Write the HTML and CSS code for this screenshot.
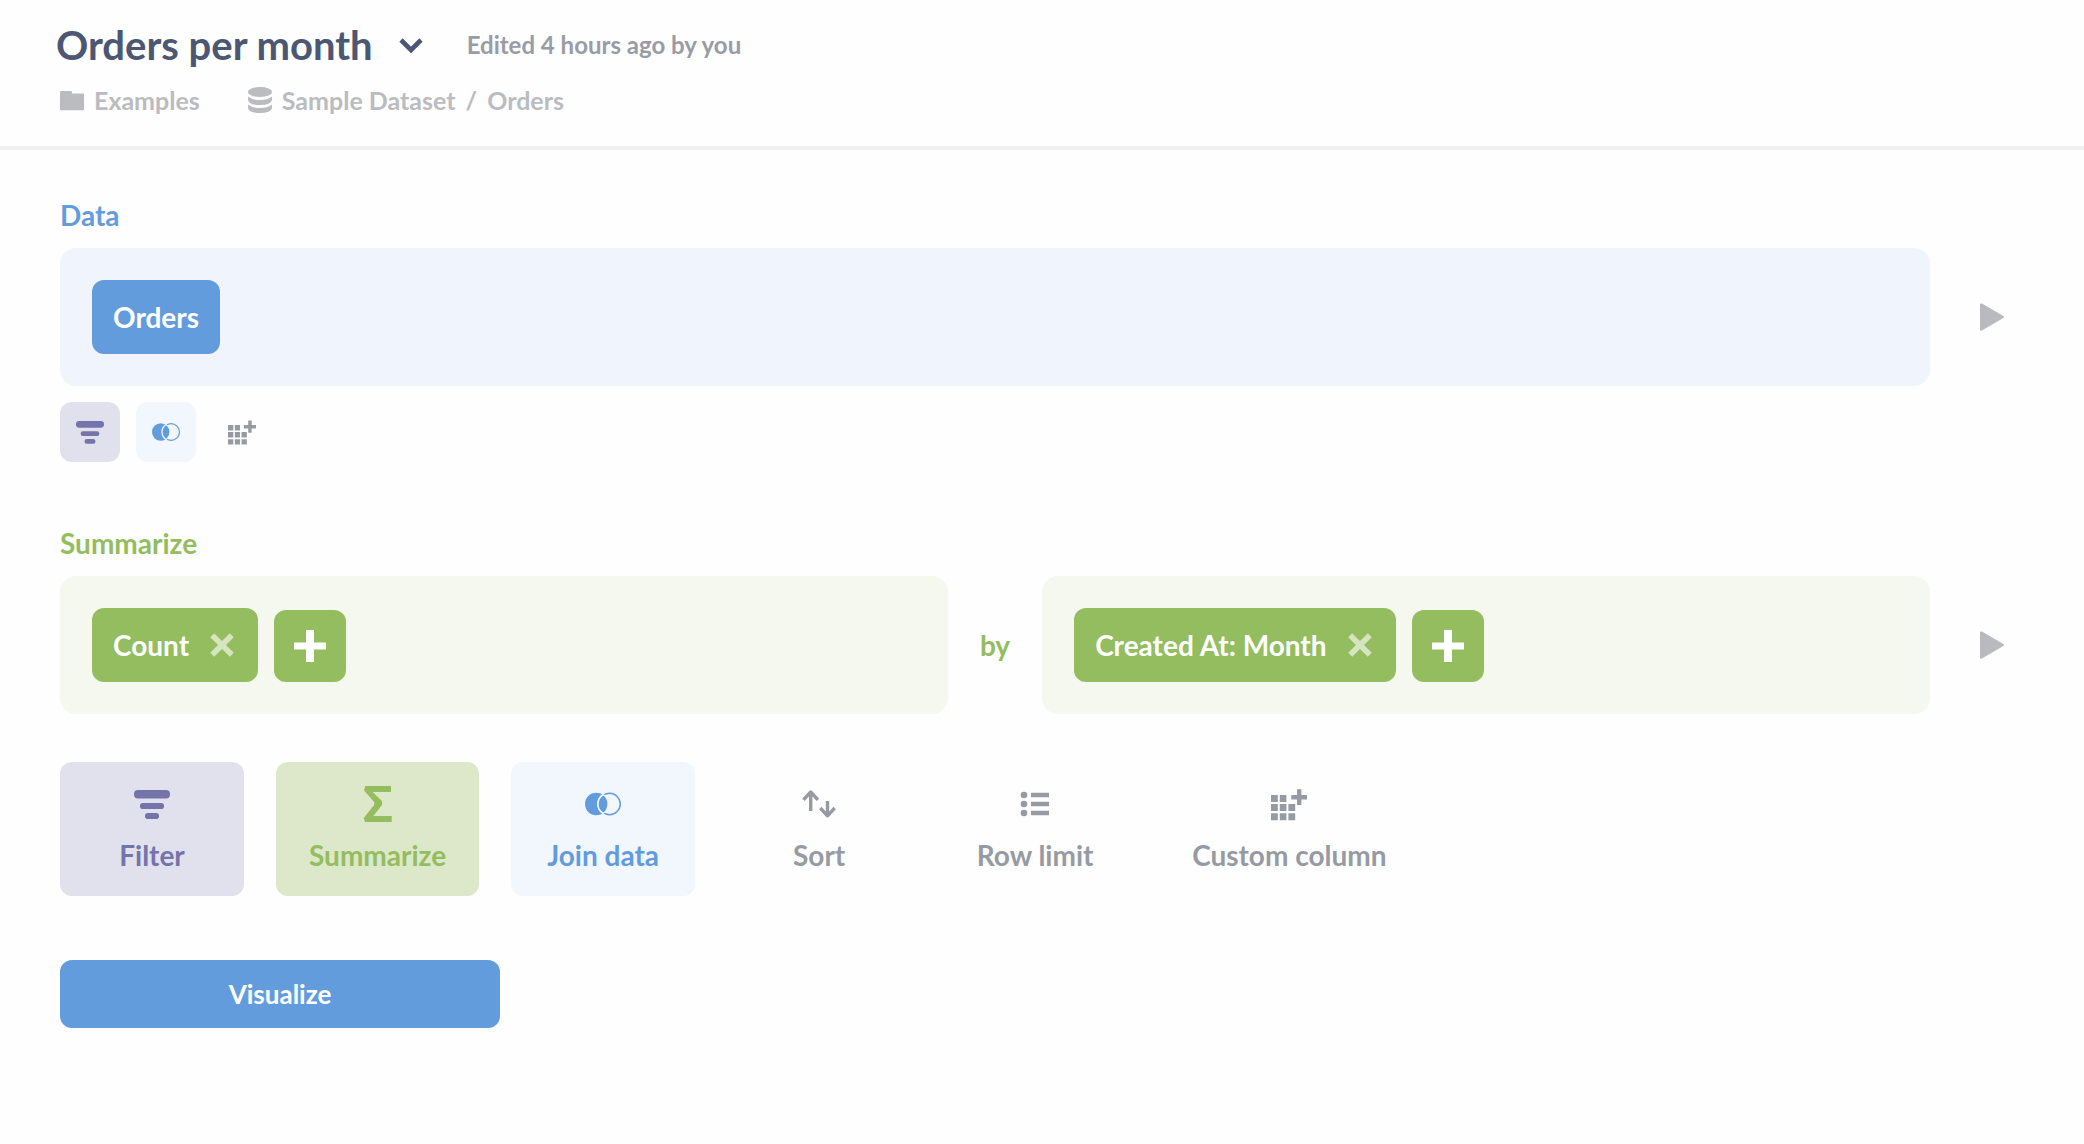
FILE: index.html
```html
<!DOCTYPE html>
<html lang="en">
  <head>
    <meta charset="utf-8" />
    <meta name="viewport" content="width=device-width, initial-scale=1.0" />
    <title>Orders per month</title>
    <link rel="stylesheet" href="styles.css">
  </head>
  <body>
    <svg class="sprite" aria-hidden="true">
      <symbol id="icon-filter" viewBox="0 0 36 36">
        <rect x="0" y="4" width="36" height="8.4" rx="4" />
        <rect x="6" y="17" width="24" height="6" rx="2.8" />
        <rect x="11" y="27" width="14" height="6" rx="2.8" />
      </symbol>
      <symbol id="icon-sum" viewBox="0 0 36 36">
        <path d="M5.3 0H31v6H12.7L22 15v4l-8.7 11H31.7v6H5l-1.3-4L14.2 19v-3L4 4.5z" />
      </symbol>
      <symbol id="icon-join" viewBox="0 0 36 36">
        <circle cx="24.6" cy="18" r="10.7" fill="none" stroke="currentColor" stroke-width="1.5" />
        <circle cx="11.2" cy="18" r="12.4" fill="var(--tile)" />
        <circle cx="11.2" cy="18" r="11.2" />
        <path d="M18.3 8.4a11.2 11.2 0 0 0 0 19.2" fill="none" stroke="var(--tile)" stroke-width="1.7" />
      </symbol>
      <symbol id="icon-column" viewBox="0 0 36 36">
        <path d="M0 9h6.8v7H0zM8.8 9h6.6v7H8.8zM0 18h6.8v7H0zM8.8 18h6.6v7H8.8zM17.4 18h6.8v7h-6.8zM0 27.2h6.8v7H0zM8.8 27.2h6.6v7H8.8zM17.4 27.2h6.8v7h-6.8z" />
        <path d="M26 3.3h4.4V9H36v4.4h-5.6V19H26v-5.6h-5.7V9H26z" />
      </symbol>
      <symbol id="icon-close" viewBox="0 0 24 24">
        <path d="M2.2 2.2l19.6 19.6M21.8 2.2L2.2 21.8" fill="none" stroke="currentColor" stroke-width="5.6" />
      </symbol>
      <symbol id="icon-add" viewBox="0 0 32 32">
        <path d="M12 0h8v12.5h12v7H20V32h-8V19.5H0v-7h12z" />
      </symbol>
      <symbol id="icon-play" viewBox="0 0 24 28">
        <path d="M0 1.5Q0 0 2 .5L23.3 13Q24.8 14 23.3 15L2 27.5Q0 28 0 26.5z" />
      </symbol>
    </svg>

    <header class="header">
      <div class="title-row">
        <h1 class="title">Orders per month</h1>
        <button class="icon-button" aria-label="Question menu">
          <svg class="icon-md" viewBox="0 0 24 24"><path d="M2 7l10 10L22 7" fill="none" stroke="currentColor" stroke-width="4.6" /></svg>
        </button>
        <span class="edited">Edited 4 hours ago by you</span>
      </div>
      <nav class="crumbs">
        <a class="crumb" href="#">
          <svg class="icon-md" viewBox="0 0 24 24"><path d="M0 4q0-1 1-1h10q1 0 1 1v1.5h11q1 0 1 1V21q0 1.3-1.3 1.3H1.3Q0 22.3 0 21z" /></svg>
          Examples
        </a>
        <div class="crumb">
          <svg class="icon-db" viewBox="0 0 24 26">
            <ellipse cx="12" cy="5" rx="12" ry="5" />
            <path d="M0 9.5q4 3.6 12 3.6t12-3.6V13q-1 5-12 5T0 13z" />
            <path d="M0 17.5q4 3.6 12 3.6t12-3.6V21q-1 5-12 5T0 21z" />
          </svg>
          <a href="#">Sample Dataset</a>
          <span>/</span>
          <a href="#">Orders</a>
        </div>
      </nav>
    </header>

    <main class="notebook">
      <section class="step blue">
        <h2 class="step-title">Data</h2>
        <div class="step-row">
          <div class="panel">
            <button class="chip">Orders</button>
          </div>
          <button class="preview" aria-label="Preview data"><svg class="icon-play"><use href="#icon-play" /></svg></button>
        </div>
        <div class="small-actions">
          <button class="small-action filter" aria-label="Filter"><svg class="icon-sm"><use href="#icon-filter" /></svg></button>
          <button class="small-action join" aria-label="Join data"><svg class="icon-sm"><use href="#icon-join" /></svg></button>
          <button class="small-action" aria-label="Custom column"><svg class="icon-sm"><use href="#icon-column" /></svg></button>
        </div>
      </section>

      <section class="step green">
        <h2 class="step-title">Summarize</h2>
        <div class="step-row">
          <div class="panel">
            <div class="chip">
              Count
              <button class="remove" aria-label="Remove Count"><svg class="icon-md"><use href="#icon-close" /></svg></button>
            </div>
            <button class="add" aria-label="Add metric"><svg class="icon-add"><use href="#icon-add" /></svg></button>
          </div>
          <span class="by">by</span>
          <div class="panel">
            <div class="chip">
              Created At: Month
              <button class="remove" aria-label="Remove Created At"><svg class="icon-md"><use href="#icon-close" /></svg></button>
            </div>
            <button class="add" aria-label="Add grouping"><svg class="icon-add"><use href="#icon-add" /></svg></button>
          </div>
          <button class="preview" aria-label="Preview summary"><svg class="icon-play"><use href="#icon-play" /></svg></button>
        </div>
      </section>

      <div class="actions">
        <button class="action filter"><svg class="icon-lg"><use href="#icon-filter" /></svg>Filter</button>
        <button class="action summarize"><svg class="icon-lg"><use href="#icon-sum" /></svg>Summarize</button>
        <button class="action join"><svg class="icon-lg"><use href="#icon-join" /></svg>Join data</button>
        <button class="action">
          <svg class="icon-lg" viewBox="0 0 36 36">
            <path d="M9.7 25V6M2.5 13.8l7.2-7.8 7.2 7.8M26.5 15v15M19.3 22l7.2 7.8 7.2-7.8" fill="none" stroke="currentColor" stroke-width="3.4" stroke-linejoin="round" />
          </svg>
          Sort
        </button>
        <button class="action">
          <svg class="icon-lg" viewBox="0 0 36 36">
            <circle cx="7" cy="9" r="3.3" />
            <circle cx="7" cy="18" r="3.3" />
            <circle cx="7" cy="27" r="3.3" />
            <path d="M14 6.8h18v4.5H14zM14 15.8h18v4.5H14zM14 24.8h18v4.5H14z" />
          </svg>
          Row limit
        </button>
        <button class="action"><svg class="icon-lg"><use href="#icon-column" /></svg>Custom column</button>
      </div>

      <button class="visualize">Visualize</button>
    </main>
  </body>
</html>
```
FILE: styles.css
```css
* {
  box-sizing: border-box;
}
body {
  margin: 0;
  background-color: #fefefe;
  color: #969ba3;
  font-family: Lato, "Liberation Sans", sans-serif;
  font-size: 28px;
  font-weight: 700;
  line-height: 34px;
}
h1,
h2 {
  margin: 0;
  font-weight: 700;
}
a {
  color: inherit;
  text-decoration: none;
}
button {
  padding: 0;
  border: none;
  background: none;
  color: inherit;
  font: inherit;
  cursor: pointer;
}
svg {
  display: block;
  fill: currentColor;
}
.sprite {
  position: absolute;
  width: 0;
  height: 0;
}
.icon-sm {
  width: 28px;
  height: 28px;
}
.icon-md {
  width: 24px;
  height: 24px;
}
.icon-lg {
  width: 36px;
  height: 36px;
}
.icon-db {
  width: 24px;
  height: 26px;
}
.icon-add {
  width: 32px;
  height: 32px;
}
.icon-play {
  width: 24px;
  height: 28px;
}

/* header */
.header {
  padding: 20px 56px 32px;
  border-bottom: 4px solid #efefef;
}
.title-row {
  display: flex;
  align-items: center;
  margin-bottom: 16px;
}
.title {
  color: #4c5773;
  font-size: 40px;
  line-height: 50px;
}
.icon-button {
  margin: 0 44px 0 26px;
  color: #4c5773;
}
.edited {
  color: #989ca6;
  font-size: 24px;
}
.crumbs {
  display: flex;
  gap: 48px;
  padding-left: 4px;
  color: #babcc0;
  font-size: 25px;
  line-height: 28px;
}
.crumb {
  display: flex;
  align-items: center;
  gap: 10px;
}

/* notebook steps */
.notebook {
  padding: 48px 60px;
}
.step {
  margin-bottom: 64px;
}
.blue {
  --main: #639cdd;
  --light: #f0f4fd;
}
.green {
  --main: #93bd5e;
  --light: #f4f8ee;
  margin-bottom: 48px;
}
.step-title {
  margin-bottom: 16px;
  color: var(--main);
  font-size: 28px;
}
.step-row {
  display: flex;
  align-items: center;
}
.panel {
  display: flex;
  flex: 1;
  align-items: flex-end;
  gap: 16px;
  padding: 32px;
  border-radius: 16px;
  background-color: var(--light);
}
.chip {
  display: flex;
  align-items: center;
  gap: 21px;
  padding: 20px 21px;
  border-radius: 12px;
  background-color: var(--main);
  color: white;
}
.remove {
  margin-right: 3px;
  color: #d4e5bf;
}
.add {
  padding: 20px;
  border-radius: 12px;
  background-color: var(--main);
  color: white;
}
.by {
  padding: 0 32px;
  color: var(--main);
}
.preview {
  display: flex;
  justify-content: center;
  width: 64px;
  margin-left: 30px;
  color: #b9babe;
}
.small-actions {
  display: flex;
  gap: 16px;
  margin-top: 16px;
}
.small-action {
  padding: 16px;
  border-radius: 12px;
}
.filter {
  background-color: #e1e1ed;
  color: #7474ab;
}
.summarize {
  background-color: #dde8ca;
  color: #93bd5e;
}
.join {
  --tile: #f1f7fd;
  background-color: var(--tile);
  color: #639cdd;
}

/* step buttons */
.actions {
  display: flex;
  flex-wrap: wrap;
  gap: 32px;
  margin-bottom: 64px;
}
.action {
  display: flex;
  flex-direction: column;
  align-items: center;
  gap: 16px;
  min-width: 184px;
  padding: 24px 33px;
  border-radius: 12px;
}
.visualize {
  width: 440px;
  max-width: 100%;
  padding: 17px;
  border-radius: 12px;
  background-color: #639cdd;
  color: white;
  font-size: 26px;
}
```
